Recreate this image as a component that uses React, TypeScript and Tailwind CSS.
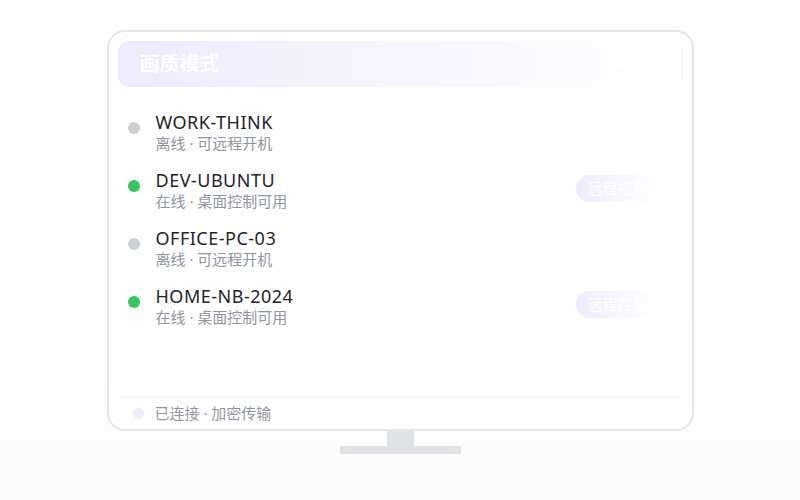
import type React from "react";

type Device = {
  name: string;
  online: boolean;
};

const devices: Device[] = [
  { name: "WORK-THINK", online: false },
  { name: "DEV-UBUNTU", online: true },
  { name: "OFFICE-PC-03", online: false },
  { name: "HOME-NB-2024", online: true },
];

const DeviceRow: React.FC<{ device: Device }> = ({ device }) => (
  <div className="flex items-start px-[10px]">
    <span
      className={`mt-[11px] h-3 w-3 shrink-0 rounded-full ${device.online ? "bg-[#34c759]" : "bg-[#cbd0d7]"}`}
    />
    <div className="ml-4 flex flex-col">
      <span className="text-[18px] leading-[22px] tracking-[0.5px] text-[#1f2329]">
        {device.name}
      </span>
      <span className="text-[15px] leading-[20px] text-[#8f959e]">
        {device.online ? "在线 · 桌面控制可用" : "离线 · 可远程开机"}
      </span>
    </div>
    {device.online && (
      <div className="ml-auto mr-[13px] mt-[6px] flex h-[27px] w-[84px] items-center overflow-hidden rounded-full bg-gradient-to-r from-[#efebff] via-[#f7f5ff] to-white pl-3 text-[15px] text-white">
        <span className="whitespace-nowrap">远程控制</span>
      </div>
    )}
  </div>
);

export default function App() {
  return (
    <div
      className="flex h-[500px] w-[800px] flex-col items-center bg-gradient-to-b from-white via-white to-[#fcfcfd] pt-[30px]"
      style={{ fontFamily: '"Noto Sans", "Noto Sans CJK SC", sans-serif' }}
    >
      <div className="flex h-[401px] w-[587px] flex-col rounded-[18px] border-2 border-[#e4e6ea] bg-white px-[9px] pt-[9px]">
        <div className="flex h-[46px] items-center justify-between rounded-[12px] border-r border-[#f1f2f5] bg-gradient-to-r from-[#eeeaff] via-[#f7f5ff] to-white px-[22px]">
          <span className="text-[20px] font-bold text-white">画质模式</span>
          <span className="mr-4 text-[13px] text-white">● ●</span>
        </div>

        <div className="mt-6 flex flex-1 flex-col gap-4">
          {devices.map((d) => (
            <DeviceRow key={d.name} device={d} />
          ))}
        </div>

        <div className="mx-[2px] border-t border-[#eef0f3]">
          <div className="flex h-[32px] items-center pl-[13px]">
            <span className="h-[11px] w-[11px] rounded-full bg-[#eeebff]" />
            <span className="ml-[11px] text-[15px] text-[#8f959e]">
              已连接 · 加密传输
            </span>
          </div>
        </div>
      </div>

      <div className="h-[15px] w-[27px] bg-[#dfe3e8]" />
      <div className="h-2 w-[121px] bg-[#dfe3e8]" />
    </div>
  );
}
